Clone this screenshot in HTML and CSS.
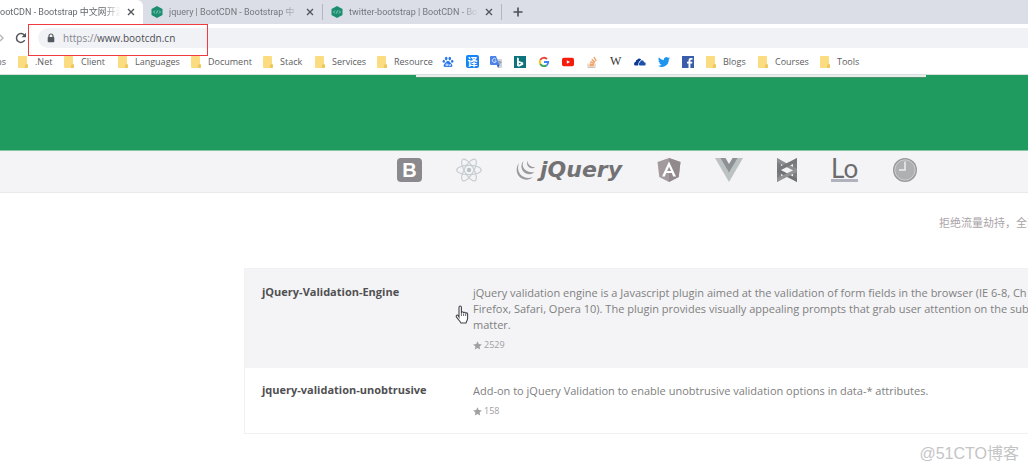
FILE: index.html
```html
<!DOCTYPE html>
<html lang="zh-CN">
<head>
<meta charset="utf-8">
<title>BootCDN - Bootstrap 中文网开源项目免费 CDN 加速服务</title>
<link rel="stylesheet" href="styles.css">
</head>
<body>
<svg class="defs" aria-hidden="true">
  <symbol id="close" viewBox="0 0 8 8"><path d="M1 1l6 6M7 1L1 7" stroke="#53565b" stroke-width="1.4"/></symbol>
  <symbol id="cdn" viewBox="0 0 12 12"><path d="M6 0l5.500 3v6L6 12 .5 9V3z" fill="#1b8e70"/><path d="M4 4.500L2.500 6 4 7.500M8 4.500L9.500 6 8 7.500M6.600 4.500L5.400 7.500" fill="none" stroke="#a8d9c9" stroke-width=".8"/></symbol>
  <symbol id="folder" viewBox="0 0 10 12"><path d="M1 0h7q1 0 1 1v7l1 1v2q0 1-1 1H1q-1 0-1-1V1q0-1 1-1z" fill="#fcdc81"/><path d="M9 8l1 1v2q0 1-1 1H7V9z" fill="#efc65c"/></symbol>
  <symbol id="star" viewBox="0 0 10 10"><path d="M5 .3l1.400 3.100 3.400.4-2.500 2.300.7 3.400L5 7.800 2 9.500l.7-3.400L.2 3.800l3.400-.4z" fill="#a0a0a2"/></symbol>
</svg>

<header class="browser">
  <nav class="tabs" aria-label="Tabs">
    <button class="tab tab-active"><span class="tab-title">ootCDN - Bootstrap 中文网开源</span><svg class="close"><use href="#close"/></svg></button>
    <button class="tab"><svg class="favicon"><use href="#cdn"/></svg><span class="tab-title">jquery | BootCDN - Bootstrap 中</span><svg class="close"><use href="#close"/></svg></button>
    <button class="tab"><svg class="favicon"><use href="#cdn"/></svg><span class="tab-title">twitter-bootstrap | BootCDN - Bo</span><svg class="close"><use href="#close"/></svg></button>
    <button class="new-tab" aria-label="New tab"><svg viewBox="0 0 10 10"><path d="M5 .5v9M.5 5h9" stroke="#4c4f55" stroke-width="1.600"/></svg></button>
  </nav>

  <div class="toolbar">
    <button class="forward" aria-label="Forward"><svg viewBox="0 0 4 8"><path d="M0 1l3 3-3 3" fill="none" stroke="#b5b7ba" stroke-width="1.500"/></svg></button>
    <button class="reload" aria-label="Reload"><svg viewBox="0 0 12 12"><path d="M9.700 8.200A4.400 4.400 0 1 1 9.300 3.200" fill="none" stroke="#53565b" stroke-width="1.500"/><path d="M11 .8v4.400H6.600z" fill="#53565b"/></svg></button>
    <div class="address">
      <svg class="lock" viewBox="0 0 8 10"><path d="M2 4.500V3a2 2 0 0 1 4 0v1.500" fill="none" stroke="#55585d" stroke-width="1.200"/><rect x=".7" y="4" width="6.600" height="5.300" rx=".7" fill="#55585d"/></svg>
      <span class="scheme">https://</span><input class="url" aria-label="Address" value="www.bootcdn.cn">
    </div>
    <div class="marker"></div>
  </div>

  <nav class="bookmarks" aria-label="Bookmarks">
    <a class="mark mark-cut" href="#">ps</a>
    <a class="mark" href="#"><svg class="folder"><use href="#folder"/></svg>.Net</a>
    <a class="mark" href="#"><svg class="folder"><use href="#folder"/></svg>Client</a>
    <a class="mark" href="#"><svg class="folder"><use href="#folder"/></svg>Languages</a>
    <a class="mark" href="#"><svg class="folder"><use href="#folder"/></svg>Document</a>
    <a class="mark" href="#"><svg class="folder"><use href="#folder"/></svg>Stack</a>
    <a class="mark" href="#"><svg class="folder"><use href="#folder"/></svg>Services</a>
    <a class="mark" href="#"><svg class="folder"><use href="#folder"/></svg>Resource</a>
    <a class="site" href="#" aria-label="Baidu"><svg viewBox="0 0 12 12"><g fill="#2c78ec"><ellipse cx="4.200" cy="2.600" rx="1.300" ry="1.800"/><ellipse cx="7.800" cy="2.600" rx="1.300" ry="1.800"/><ellipse cx="1.800" cy="5.300" rx="1.200" ry="1.500"/><ellipse cx="10.200" cy="5.300" rx="1.200" ry="1.500"/><path d="M6 5c2 0 2.400 2 3.700 3s.8 3-1 3H3.300c-1.800 0-2.300-2-1-3S4 5 6 5z"/></g><path d="M4 8h1.600v1.700H4zM7 8v1.700h1.600V8" fill="none" stroke="#fff" stroke-width=".7"/></svg></a>
    <a class="site" href="#"><span class="translate">译</span></a>
    <a class="site" href="#" aria-label="Google Translate"><svg viewBox="0 0 12 12"><path d="M5 3h6q1 0 1 1v7q0 1-1 1H8z" fill="#cfd3da"/><path d="M7 6h4.500M9.300 5v1M8 10l3-4" stroke="#7d889b" stroke-width=".8"/><path d="M1 0h5l3.500 9H1Q0 9 0 8V1Q0 0 1 0z" fill="#4c83ea"/><path d="M6 3.300A2 2 0 1 0 6.300 5H4.600" fill="none" stroke="#e4edff" stroke-width=".9"/><path d="M7 9h2.500L8 12z" fill="#2854b4"/></svg></a>
    <a class="site" href="#" aria-label="Bing"><svg viewBox="0 0 12 12"><path d="M0 0h12v12H0z" fill="#0c747a"/><path d="M3 1.500l1.800.6v3l4.400 1.300v2.300L4.800 10.800 3 9.800zM4.800 6.700v2l2.400-1.300z" fill="#fff" fill-rule="evenodd"/></svg></a>
    <a class="site" href="#" aria-label="Google"><svg viewBox="0 0 12 12"><g fill="none" stroke-width="1.800"><path d="M9 3A4.200 4.200 0 0 0 2.300 4" stroke="#ea4335"/><path d="M2.300 4a4.200 4.200 0 0 0 0 4" stroke="#fbbc05"/><path d="M2.300 8A4.200 4.200 0 0 0 8.700 9.200" stroke="#34a853"/><path d="M8.700 9.200A4 4 0 0 0 10.200 6H6" stroke="#4285f4"/></g></svg></a>
    <a class="site" href="#" aria-label="YouTube"><svg viewBox="0 0 12 12"><rect y="1.800" width="12" height="8.500" rx="1.800" fill="#f61c0d"/><path d="M4.800 4.200v3.600L8 6z" fill="#fff"/></svg></a>
    <a class="site" href="#" aria-label="Stack Overflow"><svg viewBox="0 0 12 12"><path d="M2 7.500v4h7v-4" fill="none" stroke="#c8c2bb"/><path d="M3.300 9.800h4.500M3.500 7.900l4.400.8M4.200 5.700l4.100 1.700M5.700 3.400l3.300 3M8 1l2.200 4" stroke="#f2a468" stroke-width="1.500"/></svg></a>
    <a class="site" href="#"><span class="wiki">W</span></a>
    <a class="site" href="#" aria-label="OneDrive"><svg viewBox="0 0 12 12"><path d="M0 8q0-2 1.700-2.200Q1.700 4 3.500 3.500 5 1.500 7.200 3.500L5 6 4 9.500H1.500Q0 9.500 0 8z" fill="#0c3a93"/><path d="M4.400 8q0-1.600 1.400-1.800Q6 4 8 4q1.800 0 2.200 2Q12 6.200 12 8t-1.600 1.800H6Q4.400 9.800 4.400 8z" fill="#1a4fae" stroke="#fff" stroke-width=".5"/></svg></a>
    <a class="site" href="#" aria-label="Twitter"><svg viewBox="0 0 24 24"><path d="M24 4.600a10 10 0 0 1-2.800.8 5 5 0 0 0 2.100-2.700 10 10 0 0 1-3.100 1.200 4.900 4.900 0 0 0-8.400 4.500A14 14 0 0 1 1.700 3.200a4.900 4.900 0 0 0 1.500 6.500 5 5 0 0 1-2.200-.6 4.900 4.900 0 0 0 3.900 4.900 5 5 0 0 1-2.200.1 4.900 4.900 0 0 0 4.600 3.400A10 10 0 0 1 0 19.500 14 14 0 0 0 21.500 7.100 10 10 0 0 0 24 4.600z" fill="#1b95f0"/></svg></a>
    <a class="site" href="#" aria-label="Facebook"><svg viewBox="0 0 12 12"><path d="M0 0h12v12H0z" fill="#3b5caa"/><path d="M6.500 12V7.500H5V5.700h1.500V4.200Q6.500 2 8.800 2h1.700v1.700H9.200q-.8 0-.8.800v1.200h2l-.3 1.800H8.400V12z" fill="#fff"/></svg></a>
    <a class="mark" href="#"><svg class="folder"><use href="#folder"/></svg>Blogs</a>
    <a class="mark" href="#"><svg class="folder"><use href="#folder"/></svg>Courses</a>
    <a class="mark" href="#"><svg class="folder"><use href="#folder"/></svg>Tools</a>
  </nav>
</header>

<main class="page">
  <section class="hero"><div class="search-edge"></div></section>

  <nav class="logos" aria-label="Libraries">
    <a class="logo-b" href="#" aria-label="Bootstrap">B</a>
    <a href="#" aria-label="React"><svg width="26" height="24" viewBox="0 0 26 24"><g fill="none" stroke="#c5cdd1" stroke-width="1.200"><ellipse cx="13" cy="12" rx="12.300" ry="4.600"/><ellipse cx="13" cy="12" rx="12.300" ry="4.600" transform="rotate(60 13 12)"/><ellipse cx="13" cy="12" rx="12.300" ry="4.600" transform="rotate(120 13 12)"/></g><circle cx="13" cy="12" r="2.200" fill="#b9c2c7"/></svg></a>
    <a class="logo-jquery" href="#"><svg width="20" height="20" viewBox="0 0 20 20"><g fill="#9a9a9c"><path d="M3 3C-1 8 0 16 7 19q6 2 10-2-5 2-9 0C2 14 1 8 3 3z"/><path d="M7.500 1C4 5 5 11 10 13.500q5 2 8.500-1.500-4 1-7.500-1C6.500 8.500 6 5 7.500 1z"/><path d="M12 .5c-2 3-.5 6.500 2.500 7.500 2 .6 3.500 0 4.500-1-2 .3-3.500 0-5-1.200C12 4.300 11.500 2.500 12 .5z"/></g></svg><span>jQuery</span></a>
    <a href="#" aria-label="Angular"><svg width="24" height="24" viewBox="0 0 24 24"><path d="M12 0l11.500 4-1.800 15L12 24l-9.700-5L.5 4z" fill="#a39a9d"/><path d="M12 0l11.500 4-1.800 15L12 24z" fill="#92898c"/><path d="M12 3.500L5 18.500h2.800l1.400-3.500h5.600l1.400 3.500H19zm0 5.200l2 4.300h-4z" fill="#fff"/></svg></a>
    <a href="#" aria-label="Vue"><svg width="28" height="24" viewBox="0 0 28 24"><path d="M0 0h28L14 24z" fill="#bcc1c1"/><path d="M5.500 0h17L14 14.500z" fill="#8d9194"/><path d="M10.500 0h7L14 6z" fill="#f4f4f6"/></svg></a>
    <a href="#" aria-label="Backbone"><svg width="20" height="24" viewBox="0 0 20 24"><path d="M0 0l4 2.500v19L0 24zM20 0l-4 2.500v19l4 2.500z" fill="#7d7e81"/><path d="M0 0l20 11v3.500L0 4z" fill="#8d8e91"/><path d="M0 10l20 10.500V24L0 14z" fill="#717275"/><path d="M20 0v4L0 14v-4z" fill="#77787b"/><path d="M20 10.500V14L0 24v-4z" fill="#929396"/></svg></a>
    <a class="logo-lo" href="#">Lo</a>
    <a href="#" aria-label="Moment"><svg width="26" height="26" viewBox="0 0 26 26"><circle cx="13" cy="13" r="12" fill="#98999b"/><circle cx="13" cy="13" r="10.200" fill="#afb0b2" stroke="#d0d0d2" stroke-width="1"/><path d="M13 4.500V13H7" fill="none" stroke="#eeeef0" stroke-width="1.500"/></svg></a>
  </nav>

  <p class="notice">拒绝流量劫持，全面</p>

  <section class="results">
    <article class="result result-hover">
      <h2><a href="#">jQuery-Validation-Engine</a></h2>
      <div>
        <p>jQuery validation engine is a Javascript plugin aimed at the validation of form fields in the browser (IE 6-8, Ch<br>Firefox, Safari, Opera 10). The plugin provides visually appealing prompts that grab user attention on the subj<br>matter.</p>
        <span class="stars"><svg><use href="#star"/></svg>2529</span>
      </div>
      <svg class="pointer" viewBox="0 0 14 19"><path d="M4 12V2.300Q4 1 5.200 1t1.200 1.300V8q0-1.200 1-1.200T8.600 8q.2-.8 1-.7t1 1.200q.2-.8 1-.6t1 1.300V13q0 2-1 3.300L11 18H6l-1-1.500-3.500-4.300Q.8 11 1.500 10.300t1.700.4z" fill="#fff" stroke="#43454d" stroke-width="1.100"/><path d="M6.400 8v3M8.600 8.500V11M10.700 9v2" stroke="#43454d" stroke-width=".8"/></svg>
    </article>
    <article class="result">
      <h2><a href="#">jquery-validation-unobtrusive</a></h2>
      <div>
        <p>Add-on to jQuery Validation to enable unobtrusive validation options in data-* attributes.</p>
        <span class="stars"><svg><use href="#star"/></svg>158</span>
      </div>
    </article>
  </section>
  <span class="watermark">@51CTO博客</span>
</main>
</body>
</html>
```

FILE: styles.css
```css
* { box-sizing: border-box; }
body {
  margin: 0;
  background: #fff;
  color: #808080;
  font-family: "Open Sans", "Noto Sans CJK SC", sans-serif;
  overflow: hidden;
}
a { color: inherit; text-decoration: none; }
button { border: 0; padding: 0; background: none; font: inherit; color: inherit; }
svg { display: block; flex: none; }
.defs { position: absolute; width: 0; height: 0; }

.tabs { display: flex; height: 24px; background: #dcdee7; }
.tab {
  display: flex;
  align-items: center;
  width: 179px;
  padding: 0 8px;
  color: #74767e;
  font: 9px/12px Roboto, "Noto Sans CJK SC", sans-serif;
}
.tab + .tab + .tab { border-left: 1px solid #b9bbc4; border-image: linear-gradient(transparent 20%, #b4b6c0 20% 80%, transparent 80%) 1; }
.tab-active { width: 143px; padding: 0 8px 0 0; background: #fff; border-radius: 0 6px 0 0; color: #66686d; }
.tab-title {
  flex: 1;
  min-width: 0;
  overflow: hidden;
  white-space: nowrap;
  text-align: left;
  -webkit-mask-image: linear-gradient(to right, #000 85%, transparent);
  mask-image: linear-gradient(to right, #000 85%, transparent);
}
.close { width: 8px; height: 8px; margin-left: 6px; }
.favicon { width: 12px; height: 12px; margin-right: 6px; }
.new-tab { width: 32px; display: flex; align-items: center; justify-content: center; border-left: 1px solid #b4b6c0; border-image: linear-gradient(transparent 20%, #b4b6c0 20% 80%, transparent 80%) 1; }
.new-tab svg { width: 10px; height: 10px; }

.toolbar { position: relative; display: flex; align-items: center; height: 27px; }
.forward { width: 15px; }
.forward svg { width: 4px; height: 8px; }
.reload svg { width: 12px; height: 12px; }
.address {
  display: flex;
  align-items: center;
  flex: 1;
  height: 20px;
  margin-left: 11px;
  padding-left: 9px;
  border-radius: 10px 0 0 10px;
  background: #f1f2f6;
  font-size: 10px;
}
.lock { width: 8px; height: 10px; margin-right: 8px; }
.scheme { color: #85878c; }
.url { flex: 1; border: 0; padding: 0; background: none; font: inherit; color: #4c4e53; }
.marker { position: absolute; left: 28px; top: 0; width: 180px; height: 32px; border: 1px solid #ef3b3f; }

.bookmarks {
  display: grid;
  grid-template-columns: 18px 46px 54px 73px 72px 52px 62px 65px repeat(11, 24px) 52px 62px 50px;
  align-items: center;
  height: 24px;
  padding-bottom: 2px;
  border-bottom: 1px solid #dcdddf;
  color: #5c5c60;
  font-size: 9px;
  white-space: nowrap;
}
.mark { display: flex; align-items: center; }
.mark-cut { justify-content: flex-end; padding-right: 12px; }
.folder { width: 10px; height: 12px; margin-right: 7px; }
.site svg { width: 12px; height: 12px; }
.translate {
  display: block;
  width: 13px;
  border-radius: 2px;
  background: #1683f5;
  color: #fff;
  font: bold 10px/13px "Noto Sans CJK SC", sans-serif;
  text-align: center;
}
.wiki { color: #333; font: 12px/12px "Liberation Serif", serif; }

.hero { height: 76px; background: #1f9b60; border-bottom: 1px solid #86c5a4; }
.search-edge { width: 510px; height: 3px; margin-left: 416px; background: #e6efea; border-bottom: 1px solid #4f8f70; }
.logos {
  display: flex;
  align-items: center;
  gap: 34px;
  height: 42px;
  padding: 0 0 4px 397px;
  background: #f4f4f6;
  border-bottom: 1px solid #e9e9eb;
}
.logo-b { width: 25px; border-radius: 4px; background: #8b898d; color: #fff; font: bold 20px/24px "Liberation Sans", sans-serif; text-align: center; }
.logo-jquery { display: flex; align-items: center; width: 107px; color: #727274; font: italic bold 22px/24px "DejaVu Sans", sans-serif; gap: 4px; }
.logo-lo { border-bottom: 3px solid #b0b3be; color: #6b6b6e; font: 26px/22px Lato, sans-serif; }

.notice { margin: 22px 0 0 939px; font-size: 11px; line-height: 16px; color: #a9a4a8; white-space: nowrap; }
.results { margin: 37px 0 0 244px; border: 1px solid #f1f1f3; border-right: 0; }
.result { position: relative; display: grid; grid-template-columns: 211px 1fr; padding: 15px 0 15px 17px; }
.result-hover { padding: 16px 0 16px 17px; background: #f4f4f6; }
.result h2 { margin: 0; color: #505052; font-size: 11px; line-height: 14px; }
.result p { margin: 0; font-size: 11px; line-height: 16px; white-space: nowrap; }
.stars { display: flex; align-items: center; gap: 2px; margin-top: 5px; font-size: 9px; line-height: 14px; color: #a0a0a2; }
.stars svg { width: 9px; height: 9px; }
.pointer { position: absolute; left: 210px; top: 36px; width: 14px; height: 19px; }
.watermark { display: block; margin-top: 8px; padding-right: 9px; text-align: right; color: #c4c4c6; font: 16px/24px "Liberation Sans", "Noto Sans CJK SC", sans-serif; }
```
